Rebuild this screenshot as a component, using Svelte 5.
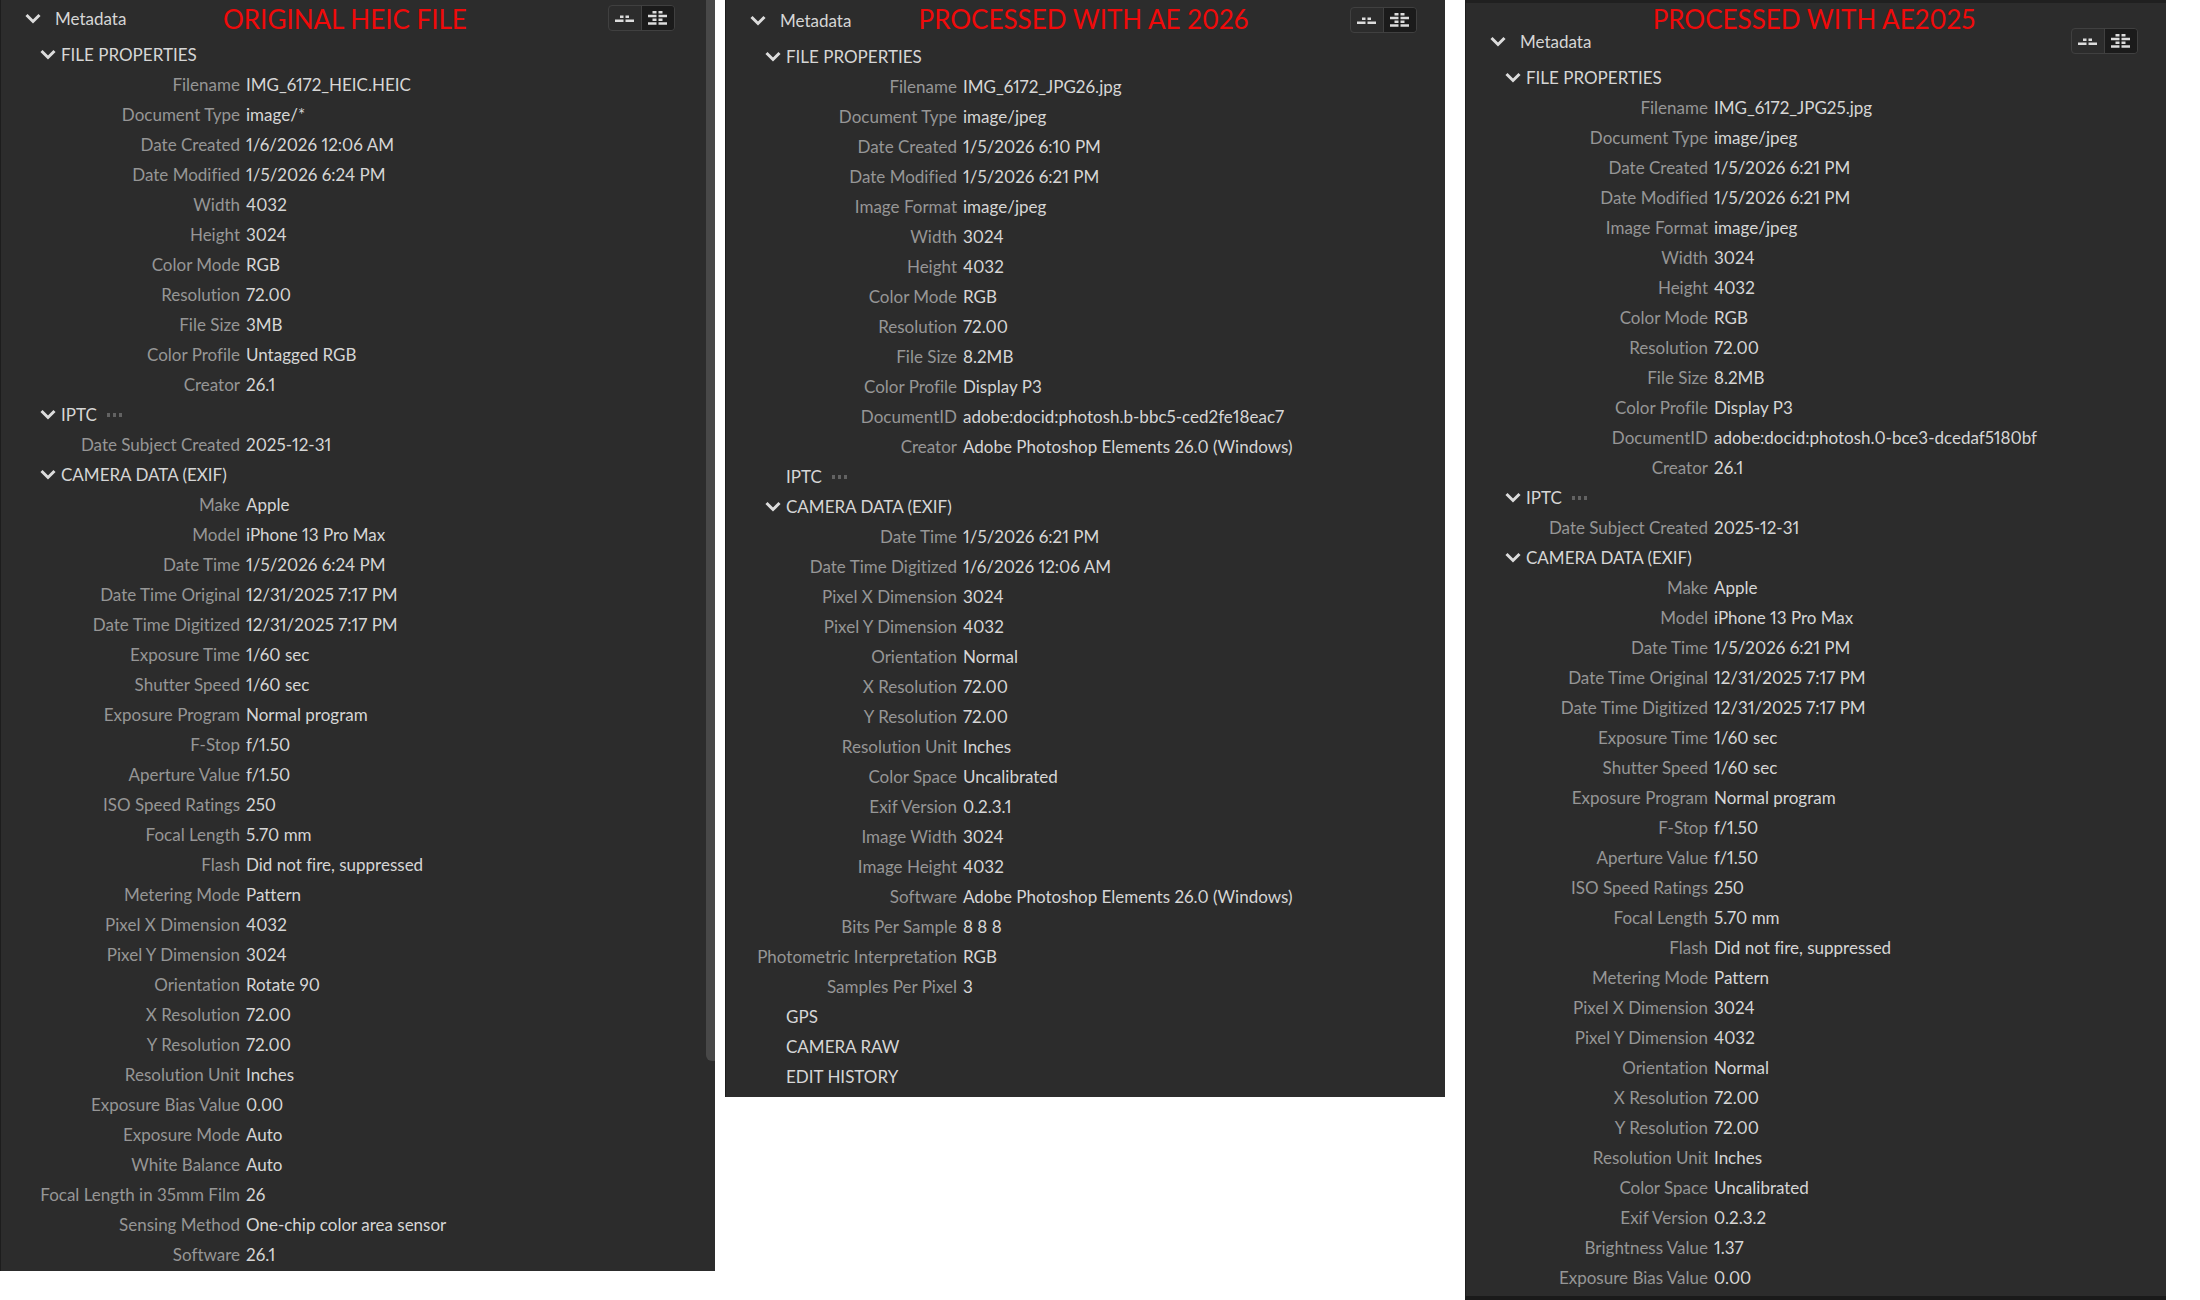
<script lang="ts">
  type Row = [string, string];
  type Section = { title: string; open?: boolean; dots?: boolean; rows?: Row[] };
  type Panel = { id: string; caption: string; sections: Section[] };

  const panels: Panel[] = [
    {
      id: 'heic',
      caption: 'ORIGINAL HEIC FILE',
      sections: [
        {
          title: 'FILE PROPERTIES',
          open: true,
          rows: [
            ['Filename', 'IMG_6172_HEIC.HEIC'],
            ['Document Type', 'image/*'],
            ['Date Created', '1/6/2026 12:06 AM'],
            ['Date Modified', '1/5/2026 6:24 PM'],
            ['Width', '4032'],
            ['Height', '3024'],
            ['Color Mode', 'RGB'],
            ['Resolution', '72.00'],
            ['File Size', '3MB'],
            ['Color Profile', 'Untagged RGB'],
            ['Creator', '26.1'],
          ],
        },
        {
          title: 'IPTC',
          open: true,
          dots: true,
          rows: [['Date Subject Created', '2025-12-31']],
        },
        {
          title: 'CAMERA DATA (EXIF)',
          open: true,
          rows: [
            ['Make', 'Apple'],
            ['Model', 'iPhone 13 Pro Max'],
            ['Date Time', '1/5/2026 6:24 PM'],
            ['Date Time Original', '12/31/2025 7:17 PM'],
            ['Date Time Digitized', '12/31/2025 7:17 PM'],
            ['Exposure Time', '1/60 sec'],
            ['Shutter Speed', '1/60 sec'],
            ['Exposure Program', 'Normal program'],
            ['F-Stop', 'f/1.50'],
            ['Aperture Value', 'f/1.50'],
            ['ISO Speed Ratings', '250'],
            ['Focal Length', '5.70 mm'],
            ['Flash', 'Did not fire, suppressed'],
            ['Metering Mode', 'Pattern'],
            ['Pixel X Dimension', '4032'],
            ['Pixel Y Dimension', '3024'],
            ['Orientation', 'Rotate 90'],
            ['X Resolution', '72.00'],
            ['Y Resolution', '72.00'],
            ['Resolution Unit', 'Inches'],
            ['Exposure Bias Value', '0.00'],
            ['Exposure Mode', 'Auto'],
            ['White Balance', 'Auto'],
            ['Focal Length in 35mm Film', '26'],
            ['Sensing Method', 'One-chip color area sensor'],
            ['Software', '26.1'],
          ],
        },
      ],
    },
    {
      id: 'ae26',
      caption: 'PROCESSED WITH AE 2026',
      sections: [
        {
          title: 'FILE PROPERTIES',
          open: true,
          rows: [
            ['Filename', 'IMG_6172_JPG26.jpg'],
            ['Document Type', 'image/jpeg'],
            ['Date Created', '1/5/2026 6:10 PM'],
            ['Date Modified', '1/5/2026 6:21 PM'],
            ['Image Format', 'image/jpeg'],
            ['Width', '3024'],
            ['Height', '4032'],
            ['Color Mode', 'RGB'],
            ['Resolution', '72.00'],
            ['File Size', '8.2MB'],
            ['Color Profile', 'Display P3'],
            ['DocumentID', 'adobe:docid:photosh.b-bbc5-ced2fe18eac7'],
            ['Creator', 'Adobe Photoshop Elements 26.0 (Windows)'],
          ],
        },
        { title: 'IPTC', dots: true },
        {
          title: 'CAMERA DATA (EXIF)',
          open: true,
          rows: [
            ['Date Time', '1/5/2026 6:21 PM'],
            ['Date Time Digitized', '1/6/2026 12:06 AM'],
            ['Pixel X Dimension', '3024'],
            ['Pixel Y Dimension', '4032'],
            ['Orientation', 'Normal'],
            ['X Resolution', '72.00'],
            ['Y Resolution', '72.00'],
            ['Resolution Unit', 'Inches'],
            ['Color Space', 'Uncalibrated'],
            ['Exif Version', '0.2.3.1'],
            ['Image Width', '3024'],
            ['Image Height', '4032'],
            ['Software', 'Adobe Photoshop Elements 26.0 (Windows)'],
            ['Bits Per Sample', '8 8 8'],
            ['Photometric Interpretation', 'RGB'],
            ['Samples Per Pixel', '3'],
          ],
        },
        { title: 'GPS' },
        { title: 'CAMERA RAW' },
        { title: 'EDIT HISTORY' },
      ],
    },
    {
      id: 'ae25',
      caption: 'PROCESSED WITH AE2025',
      sections: [
        {
          title: 'FILE PROPERTIES',
          open: true,
          rows: [
            ['Filename', 'IMG_6172_JPG25.jpg'],
            ['Document Type', 'image/jpeg'],
            ['Date Created', '1/5/2026 6:21 PM'],
            ['Date Modified', '1/5/2026 6:21 PM'],
            ['Image Format', 'image/jpeg'],
            ['Width', '3024'],
            ['Height', '4032'],
            ['Color Mode', 'RGB'],
            ['Resolution', '72.00'],
            ['File Size', '8.2MB'],
            ['Color Profile', 'Display P3'],
            ['DocumentID', 'adobe:docid:photosh.0-bce3-dcedaf5180bf'],
            ['Creator', '26.1'],
          ],
        },
        {
          title: 'IPTC',
          open: true,
          dots: true,
          rows: [['Date Subject Created', '2025-12-31']],
        },
        {
          title: 'CAMERA DATA (EXIF)',
          open: true,
          rows: [
            ['Make', 'Apple'],
            ['Model', 'iPhone 13 Pro Max'],
            ['Date Time', '1/5/2026 6:21 PM'],
            ['Date Time Original', '12/31/2025 7:17 PM'],
            ['Date Time Digitized', '12/31/2025 7:17 PM'],
            ['Exposure Time', '1/60 sec'],
            ['Shutter Speed', '1/60 sec'],
            ['Exposure Program', 'Normal program'],
            ['F-Stop', 'f/1.50'],
            ['Aperture Value', 'f/1.50'],
            ['ISO Speed Ratings', '250'],
            ['Focal Length', '5.70 mm'],
            ['Flash', 'Did not fire, suppressed'],
            ['Metering Mode', 'Pattern'],
            ['Pixel X Dimension', '3024'],
            ['Pixel Y Dimension', '4032'],
            ['Orientation', 'Normal'],
            ['X Resolution', '72.00'],
            ['Y Resolution', '72.00'],
            ['Resolution Unit', 'Inches'],
            ['Color Space', 'Uncalibrated'],
            ['Exif Version', '0.2.3.2'],
            ['Brightness Value', '1.37'],
            ['Exposure Bias Value', '0.00'],
          ],
        },
      ],
    },
  ];

  let closed: Record<string, boolean> = $state({});
  let full: Record<string, boolean> = $state({ heic: true, ae26: true, ae25: true });

  function toggle(key: string) {
    closed[key] = !closed[key];
  }
</script>

{#snippet chevron()}
  <svg class="chevron" viewBox="0 0 16 12" aria-hidden="true">
    <path d="M1.5 2l6.5 6.5L14.500 2" />
  </svg>
{/snippet}

<main>
  {#each panels as panel (panel.id)}
    <section class="panel {panel.id}">
      <header>
        <button class="title" onclick={() => toggle(panel.id)}>
          {@render chevron()}<span>Metadata</span>
        </button>
        <h2>{panel.caption}</h2>
        <div class="views">
          <button
            class:active={!full[panel.id]}
            aria-label="Compact view"
            onclick={() => (full[panel.id] = false)}
          >
            <svg viewBox="0 0 20 20" aria-hidden="true">
              <path
                d="M5 7.500h3.500v2.500H5zM10.500 7.500H14v2.500h-3.500zM0 11.500h8.500V14H0zM10.500 11.500H19V14h-8.500z"
              />
            </svg>
          </button>
          <button
            class:active={full[panel.id]}
            aria-label="Full view"
            onclick={() => (full[panel.id] = true)}
          >
            <svg viewBox="0 0 20 20" aria-hidden="true">
              <path
                d="M4.500 3h4v2.500h-4zM10.500 3h4v2.500h-4zM0 6.800h8.500v2.500H0zM10.500 6.800H19v2.500h-8.500zM4.500 10.500h4V13h-4zM10.500 10.500h4V13h-4zM0 14.200h8.500v2.500H0zM10.500 14.200H19v2.500h-8.500z"
              />
            </svg>
          </button>
        </div>
      </header>

      {#if !closed[panel.id]}
        {#each panel.sections as section}
          {@const key = panel.id + section.title}
          <h3>
            <button class="heading" onclick={() => toggle(key)}>
              <span class="mark">{#if section.open}{@render chevron()}{/if}</span>
              {section.title}
              {#if section.dots}<i class="dots"></i>{/if}
            </button>
          </h3>
          {#if section.rows && !closed[key]}
            <dl>
              {#each section.rows as [name, value]}
                <dt>{name}</dt>
                <dd>{value}</dd>
              {/each}
            </dl>
          {/if}
        {/each}
      {/if}
    </section>
  {/each}
</main>

<style>
  :global(body) {
    margin: 0;
    background: #fff;
  }

  main {
    display: grid;
    grid-template-columns: 715fr 720fr 711fr;
    column-gap: 10px;
    align-items: start;
    padding-right: 34px;
    font: 17px/30px Lato, 'Noto Sans', sans-serif;
    font-variant-ligatures: none;
    font-variant-numeric: proportional-nums;
    color: #d6d6d6;
  }

  .panel {
    --label: 239px;
    position: relative;
    box-sizing: border-box;
    background: #2c2c2c;
    border-left: 1px solid #1d1d1d;
    overflow: hidden;
  }
  .heic {
    padding-bottom: 1px;
  }
  /* scrollbar thumb */
  .heic::after {
    content: '';
    position: absolute;
    top: 0;
    right: 0;
    width: 9px;
    height: 1061px;
    border-radius: 0 0 0 6px;
    background: #484848;
  }
  .ae26 {
    --label: 231px;
    padding-bottom: 5px;
  }
  .ae25 {
    --label: 242px;
    margin-left: 10px;
    padding-bottom: 3px;
    border-bottom: 4px solid #1a1a1a;
    box-shadow: inset 0 3px #202020;
  }

  header {
    display: grid;
    grid-template-columns: 1fr auto 1fr;
    align-items: start;
    height: 40px;
    padding: 0 40px 0 24px;
    box-sizing: border-box;
  }
  .heic header {
    grid-template-columns: 198px auto 1fr;
  }
  .ae26 header {
    height: 42px;
    padding-right: 28px;
  }
  .ae25 header {
    height: 63px;
    padding-right: 28px;
  }

  button {
    padding: 0;
    border: 0;
    background: none;
    color: inherit;
    font: inherit;
    font-variant: inherit;
    cursor: pointer;
  }

  .title {
    display: flex;
    align-items: center;
    gap: 14px;
    margin-top: 4px;
  }
  .ae26 .title {
    margin-top: 6px;
  }
  .ae25 .title {
    margin-top: 27px;
  }

  .chevron {
    width: 16px;
    height: 12px;
    fill: none;
    stroke: #dcdcdc;
    stroke-width: 3;
  }

  h2 {
    margin: 0;
    font-size: 26px;
    line-height: 38px;
    font-weight: 400;
    color: #f00a0a;
    white-space: nowrap;
  }

  .views {
    display: flex;
    justify-self: end;
    margin-top: 5px;
    border: 1px solid #404040;
    border-radius: 4px;
    overflow: hidden;
  }
  .ae26 .views {
    margin-top: 7px;
  }
  .ae25 .views {
    margin-top: 28px;
  }
  .views button {
    display: flex;
    padding: 2px 6px;
  }
  .views button + button {
    border-left: 1px solid #404040;
  }
  .views button.active {
    background: #1b1b1b;
  }
  .views svg {
    width: 20px;
    height: 20px;
    fill: #dcdcdc;
  }

  h3 {
    margin: 0;
    font: inherit;
    font-variant: inherit;
  }
  .heading {
    display: flex;
    align-items: center;
    padding-left: 39px;
    white-space: nowrap;
  }
  .mark {
    display: flex;
    width: 21px;
  }
  .dots {
    width: 15px;
    height: 4px;
    margin-left: 10px;
    background: repeating-linear-gradient(90deg, #626262 0 3px, transparent 3px 6px);
  }

  dl {
    display: grid;
    grid-template-columns: var(--label) 1fr;
    column-gap: 6px;
    margin: 0;
  }
  dt {
    text-align: right;
    color: #969696;
    white-space: nowrap;
  }
  dd {
    margin: 0;
    white-space: nowrap;
  }
</style>
